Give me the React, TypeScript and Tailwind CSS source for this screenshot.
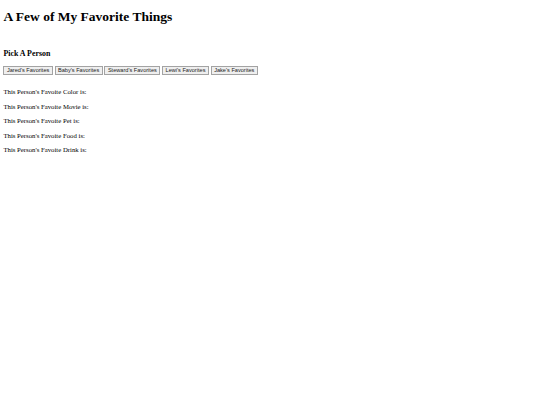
const people = ["Jared's Favorites", "Baby's Favorites", "Steward's Favorites", "Lewi's Favorites", "Jake's Favorites"];

const questions = ["Color", "Movie", "Pet", "Food", "Drink"];

export default function App() {
    return (
        <div className="min-h-screen bg-white px-[3.4px] pt-px text-black [font-family:'Liberation_Serif',serif]">
            <h1 className="mt-[8px] text-[13.5px] font-bold leading-[15.5px]">A Few of My Favorite Things</h1>

            <h3 className="mt-[24px] text-[7.9px] font-bold leading-[9px]">Pick A Person</h3>

            <div className="mt-[8.5px] flex gap-[1.7px]">
                {people.map((person) => (
                    <button
                        key={person}
                        className="h-[9px] border border-[#a3a3a3] bg-[#efefef] px-[2.5px] text-[5.6px] leading-[7px] text-[#222] [font-family:'Liberation_Sans',Arial,sans-serif]"
                    >
                        {person}
                    </button>
                ))}
            </div>

            <div className="mt-[13px] flex flex-col gap-[6.75px]">
                {questions.map((q) => (
                    <p key={q} className="text-[6.75px] leading-[7.75px]">
                        This Person's Favoite {q} is:
                    </p>
                ))}
            </div>
        </div>
    );
}
